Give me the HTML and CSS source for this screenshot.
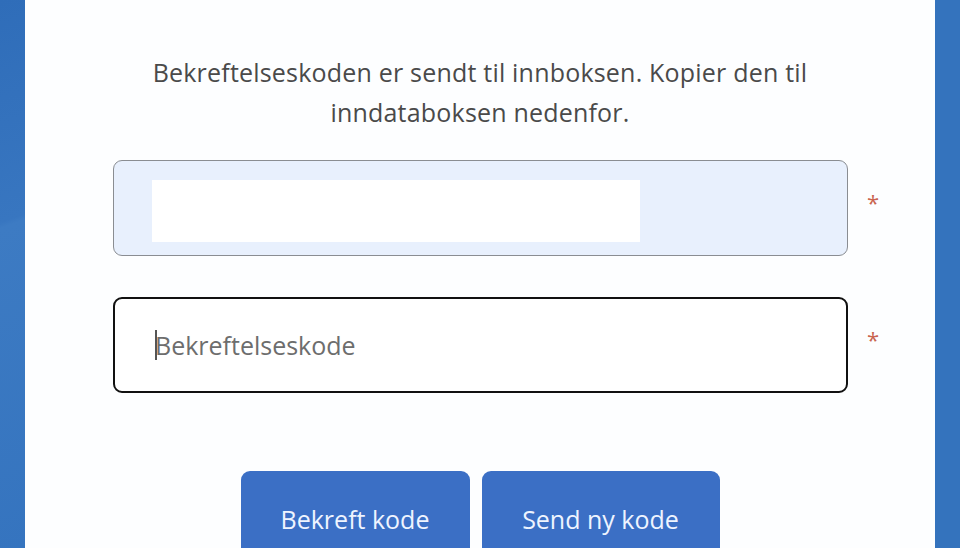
FILE: index.html
```
<!DOCTYPE html>
<html lang="nb">
<head>
<meta charset="UTF-8">
<title>Bekreft kode</title>
<link rel="stylesheet" href="styles.css">
</head>
<body>
<div class="frame">
<div class="side side-left"></div>
<div class="panel">
<p class="intro">Bekreftelseskoden er sendt til innboksen. Kopier den til inndataboksen nedenfor.</p>

<div class="field-row">
<div class="field field-filled">
<div class="mask"></div>
</div>
<span class="required">*</span>
</div>

<div class="field-row">
<div class="field field-focus">
<span class="caret"></span>
<input type="text" placeholder="Bekreftelseskode">
</div>
<span class="required">*</span>
</div>

<div class="actions">
<button class="btn">Bekreft kode</button>
<button class="btn">Send ny kode</button>
</div>
</div>
<div class="side side-right"></div>
</div>
</body>
</html>
```

FILE: styles.css
```
html, body {
margin: 0;
padding: 0;
height: 100%;
overflow: hidden;
}

body {
font-family: 'Open Sans', 'Noto Sans', sans-serif;
background-color: #3572bd;
}

.frame {
display: flex;
height: 548px;
}

.side {
width: 25px;
flex-shrink: 0;
background-color: #3574bf;
}

.side-left {
background: linear-gradient(160deg, #2f6db9 0%, #3876c0 40%, #3d7bc3 41%, #3574bf 100%);
}

.side-right {
width: 25px;
background-color: #3473bd;
}

.panel {
flex: 1;
background-color: #fdfeff;
padding-top: 52px;
}

.intro {
margin: 0 auto 28px;
width: 720px;
text-align: center;
font-size: 25px;
line-height: 40px;
color: #4a4a4a;
letter-spacing: 0.2px;
}

.field-row {
display: flex;
align-items: center;
margin-left: 88px;
margin-bottom: 41px;
}

.field {
box-sizing: border-box;
width: 735px;
height: 96px;
border-radius: 9px;
display: flex;
align-items: center;
}

.field-filled {
background-color: #e8f0fd;
border: 1.5px solid #8a8d92;
padding-left: 38px;
align-items: flex-start;
}

.mask {
width: 488px;
height: 62px;
margin-top: 19px;
background-color: #ffffff;
}

.field-focus {
border: 2.5px solid #111111;
background-color: #ffffff;
padding-left: 40px;
position: relative;
}

.caret {
position: absolute;
left: 40px;
top: 31px;
width: 2px;
height: 30px;
background-color: #555;
}

.field-focus input {
border: none;
outline: none;
background: transparent;
font-family: inherit;
font-size: 25px;
color: #333;
width: 100%;
padding: 0;
}

.field-focus input::placeholder {
color: #6d6d6d;
}

.required {
margin-left: 19px;
margin-bottom: 12px;
font-size: 22px;
color: #c9644f;
line-height: 1;
}

.actions {
display: flex;
justify-content: center;
gap: 12px;
margin-top: 78px;
}

.btn {
width: 229px;
height: 96px;
border: none;
border-radius: 9px;
background-color: #3b6fc5;
color: #eef4ff;
font-family: inherit;
font-size: 25px;
padding: 0;
}

.btn + .btn {
width: 238px;
}
```
